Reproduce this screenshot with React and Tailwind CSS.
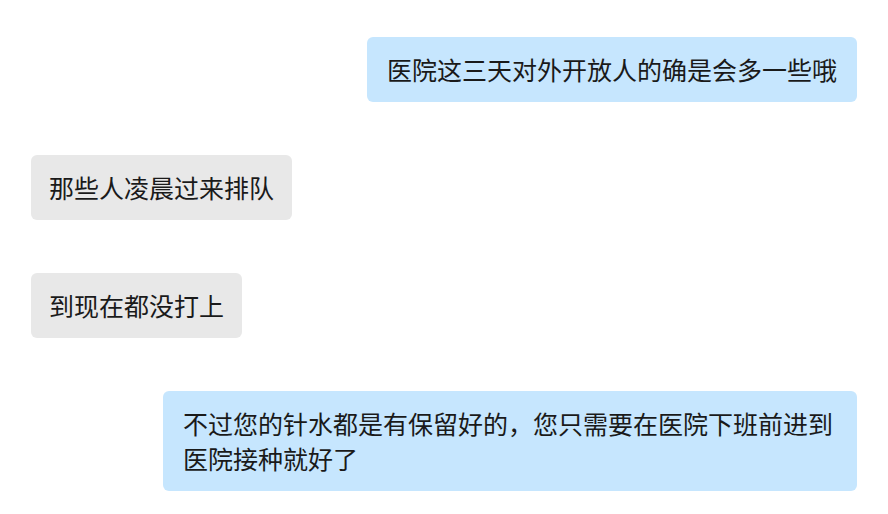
import React from 'react';

// Chat messages, in order
const messages = [
  { from: 'me', text: '医院这三天对外开放人的确是会多一些哦' },
  { from: 'them', text: '那些人凌晨过来排队' },
  { from: 'them', text: '到现在都没打上' },
  { from: 'me', text: '不过您的针水都是有保留好的，您只需要在医院下班前进到医院接种就好了' },
];

const Bubble = ({ from, text }) => {
  const mine = from === 'me';
  return (
    <div className={`flex ${mine ? 'justify-end' : 'justify-start'}`}>
      <div
        className={`max-w-[694px] rounded-md py-[15px] text-[25px] leading-[35px] text-[#1a1a1a] ${
          mine ? 'bg-[#c6e6fe] px-5' : 'bg-[#e8e8e8] px-[18px]'
        }`}
      >
        {text}
      </div>
    </div>
  );
};

export default function App() {
  return (
    <div
      className="w-[888px] h-[514px] bg-white px-[31px] pt-[37px] flex flex-col gap-[53px] overflow-hidden"
      style={{ fontFamily: '"Noto Sans CJK SC", "Noto Sans", sans-serif' }}
    >
      {messages.map((m, i) => (
        <Bubble key={i} from={m.from} text={m.text} />
      ))}
    </div>
  );
}
